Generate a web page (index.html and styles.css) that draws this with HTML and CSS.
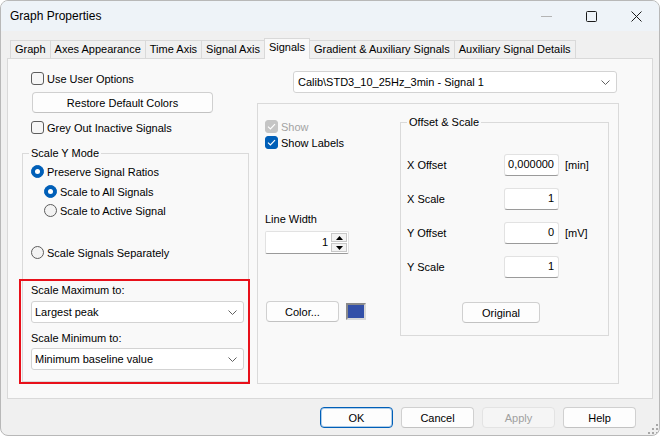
FILE: index.html
```html
<!DOCTYPE html>
<html>
<head>
<meta charset="utf-8">
<title>Graph Properties</title>
<link rel="stylesheet" href="styles.css">
</head>
<body>
<div class="window">
  <div class="titlebar">
    <span class="title">Graph Properties</span>
    <div class="caption">
      <span class="cap"><svg width="11" height="11" viewBox="0 0 11 11"><line x1="0" y1="5.5" x2="11" y2="5.5" stroke="#b4b4b4"/></svg></span>
      <span class="cap"><svg width="11" height="11" viewBox="0 0 11 11"><rect x="0.5" y="0.5" width="10" height="10" rx="1" fill="none" stroke="#1b1b1b"/></svg></span>
      <span class="cap"><svg width="11" height="11" viewBox="0 0 11 11"><path d="M0.5 0.5 L10.5 10.5 M10.5 0.5 L0.5 10.5" stroke="#1b1b1b"/></svg></span>
    </div>
  </div>

  <div class="tabs">
    <span class="tab">Graph</span>
    <span class="tab">Axes Appearance</span>
    <span class="tab">Time Axis</span>
    <span class="tab">Signal Axis</span>
    <span class="tab active">Signals</span>
    <span class="tab">Gradient &amp; Auxiliary Signals</span>
    <span class="tab">Auxiliary Signal Details</span>
  </div>

  <div class="panel">
    <div class="col-left">
      <div class="check-row ind"><span class="cb"></span>Use User Options</div>
      <button class="btn restore">Restore Default Colors</button>
      <div class="check-row ind grey"><span class="cb"></span>Grey Out Inactive Signals</div>

      <fieldset class="group ymode">
        <legend>Scale Y Mode</legend>
        <div class="radio-row r1"><span class="rb on"></span>Preserve Signal Ratios</div>
        <div class="radio-row r2"><span class="rb on"></span>Scale to All Signals</div>
        <div class="radio-row r3"><span class="rb"></span>Scale to Active Signal</div>
        <div class="radio-row r4"><span class="rb"></span>Scale Signals Separately</div>
        <div class="flabel-top lmax">Scale Maximum to:</div>
        <div class="combo cmax"><span>Largest peak</span><svg width="9" height="5" viewBox="0 0 9 5"><path d="M0.5 0.5 L4.5 4.5 L8.5 0.5" fill="none" stroke="#606060"/></svg></div>
        <div class="flabel-top lmin">Scale Minimum to:</div>
        <div class="combo cmin"><span>Minimum baseline value</span><svg width="9" height="5" viewBox="0 0 9 5"><path d="M0.5 0.5 L4.5 4.5 L8.5 0.5" fill="none" stroke="#606060"/></svg></div>
      </fieldset>
      <div class="highlight"></div>
    </div>

    <div class="col-right">
      <div class="combo sig"><span>Calib\STD3_10_25Hz_3min - Signal 1</span><svg width="9" height="5" viewBox="0 0 9 5"><path d="M0.5 0.5 L4.5 4.5 L8.5 0.5" fill="none" stroke="#606060"/></svg></div>
      <div class="sigbox">
        <div class="sigleft">
          <div class="check-row disabled"><span class="cb dis"><svg width="9" height="7" viewBox="0 0 9 7"><path d="M1 3.6 L3.4 6 L8 1.2" fill="none" stroke="#fff" stroke-width="1.2"/></svg></span>Show</div>
          <div class="check-row labels"><span class="cb on"><svg width="9" height="7" viewBox="0 0 9 7"><path d="M1 3.6 L3.4 6 L8 1.2" fill="none" stroke="#fff" stroke-width="1.2"/></svg></span>Show Labels</div>
          <div class="lw-label">Line Width</div>
          <div class="spin">
            <span class="spin-val">1</span>
            <span class="spin-btns">
              <span class="sb"><svg width="7" height="4" viewBox="0 0 7 4"><path d="M0 4 L3.5 0 L7 4 Z" fill="#000"/></svg></span>
              <span class="sb"><svg width="7" height="4" viewBox="0 0 7 4"><path d="M0 0 L3.5 4 L7 0 Z" fill="#000"/></svg></span>
            </span>
          </div>
          <div class="color-row">
            <button class="btn color">Color...</button>
            <span class="swatch"></span>
          </div>
        </div>

        <fieldset class="group offset">
          <legend>Offset &amp; Scale</legend>
          <div class="field-row first"><span class="flabel">X Offset</span><span class="input">0,000000</span><span class="unit">[min]</span></div>
          <div class="field-row"><span class="flabel">X Scale</span><span class="input">1</span></div>
          <div class="field-row"><span class="flabel">Y Offset</span><span class="input">0</span><span class="unit">[mV]</span></div>
          <div class="field-row"><span class="flabel">Y Scale</span><span class="input">1</span></div>
          <button class="btn original">Original</button>
        </fieldset>
      </div>
    </div>
  </div>

  <div class="buttons">
    <button class="btn dlg default">OK</button>
    <button class="btn dlg">Cancel</button>
    <button class="btn dlg disabled">Apply</button>
    <button class="btn dlg">Help</button>
  </div>

  <svg class="grip" width="10" height="10" viewBox="0 0 10 10">
    <rect x="8" y="0" width="2" height="2" fill="#a8a8a8"/>
    <rect x="8" y="4" width="2" height="2" fill="#a8a8a8"/>
    <rect x="4" y="4" width="2" height="2" fill="#a8a8a8"/>
    <rect x="8" y="8" width="2" height="2" fill="#a8a8a8"/>
    <rect x="4" y="8" width="2" height="2" fill="#a8a8a8"/>
    <rect x="0" y="8" width="2" height="2" fill="#a8a8a8"/>
  </svg>
</div>
</body>
</html>
```

FILE: styles.css
```css
* { box-sizing: border-box; }
html, body { margin: 0; padding: 0; background: #ffffff; }
body {
  font-family: "Liberation Sans", Arial, sans-serif;
  font-size: 11px;
  color: #000;
}

.window {
  width: 660px;
  height: 436px;
  border: 1px solid #b8b8b8;
  border-radius: 8px;
  background: #f0f0f0;
  display: flex;
  flex-direction: column;
  position: relative;
  overflow: hidden;
}

/* title bar */
.titlebar {
  height: 30px;
  flex: none;
  display: flex;
  align-items: center;
  background: #eef3f8;
  padding-left: 9px;
}
.title { font-size: 12px; flex: 1; color: #000; }
.caption { display: flex; align-self: stretch; }
.cap { width: 45px; display: flex; align-items: center; justify-content: center; }
.cap svg { display: block; }

/* tabs */
.tabs {
  display: flex;
  align-items: flex-end;
  height: 20px;
  margin: 7px 0 0 9px;
  position: relative;
  z-index: 1;
}
.tab {
  height: 18px;
  padding: 0 4px;
  border: 1px solid #d9d9d9;
  border-bottom: none;
  margin-left: -1px;
  line-height: 17px;
  background: #f0f0f0;
  white-space: nowrap;
}
.tab:first-child { margin-left: 0; }
.tab.active {
  height: 21px;
  margin-bottom: -1px;
  background: #f9f9f9;
  line-height: 17px;
  position: relative;
  z-index: 2;
}

/* main panel */
.panel {
  margin-left: 6px;
  width: 646px;
  height: 341px;
  flex: none;
  border: 1px solid #d9d9d9;
  background: #f9f9f9;
  display: grid;
  grid-template-columns: 230px 362px;
  column-gap: 7px;
  padding: 12px 0 0 12px;
  align-items: start;
}

.col-left { position: relative; display: flex; flex-direction: column; align-items: flex-start; }
.col-right { display: flex; flex-direction: column; align-items: flex-start; }

/* checkbox & radio */
.check-row, .radio-row {
  display: flex;
  align-items: center;
  height: 15px;
  gap: 3px;
  white-space: nowrap;
}
.check-row.ind { margin-left: 11px; }
.check-row.grey { margin-top: 7px; }
.cb {
  width: 13px;
  height: 13px;
  border: 1px solid #5d5d5d;
  border-radius: 3px;
  background: #f6f6f6;
  display: flex;
  align-items: center;
  justify-content: center;
  flex: none;
}
.cb.on { background: #005fb8; border-color: #005fb8; }
.cb.dis { background: #c5c5c5; border-color: #c5c5c5; }
.check-row.disabled { color: #a3a3a3; }

.rb {
  width: 13px;
  height: 13px;
  border: 1px solid #5d5d5d;
  border-radius: 50%;
  background: #f3f3f3;
  flex: none;
  position: relative;
}
.rb.on { background: #005fb8; border-color: #005fb8; }
.rb.on::after {
  content: "";
  position: absolute;
  left: 3px;
  top: 3px;
  width: 5px;
  height: 5px;
  border-radius: 50%;
  background: #fff;
}

/* buttons */
.btn {
  font-family: "Liberation Sans", Arial, sans-serif;
  font-size: 11px;
  color: #000;
  background: #fdfdfd;
  border: 1px solid #d0d0d0;
  border-bottom-color: #c2c2c2;
  border-radius: 4px;
  padding: 0;
  height: 21px;
  text-align: center;
  margin: 0;
}
.btn.restore { margin: 6px 0 0 12px; width: 181px; }

/* group boxes */
.group {
  border: 1px solid #dadada;
  border-radius: 0;
  margin: 0;
  min-width: 0;
}
.group legend {
  padding: 0 2px;
  line-height: 14px;
  height: 14px;
}
.ymode {
  margin: 11px 0 0 2px;
  width: 227px;
  padding: 0 0 11px 8px;
}
.ymode legend { margin-left: -2px; }

.radio-row.r1 { margin-top: 4px; }
.radio-row.r2 { margin-top: 5px; margin-left: 13px; }
.radio-row.r3 { margin-top: 4px; margin-left: 13px; }
.radio-row.r4 { margin-top: 27px; }
.flabel-top { line-height: 14px; height: 14px; }
.lmax { margin-top: 23px; }
.lmin { margin-top: 8px; }

.combo {
  height: 22px;
  background: #fff;
  border: 1px solid #d3d3d3;
  border-radius: 3px;
  display: flex;
  align-items: center;
  justify-content: space-between;
  padding: 0 6px 0 3px;
  white-space: nowrap;
}
.combo svg { display: block; }
.cmax { width: 213px; margin-top: 4px; }
.cmin { width: 213px; margin-top: 3px; }
.combo.sig { margin-left: 36px; width: 324px; padding-left: 4px; }

.highlight {
  position: absolute;
  left: -1px;
  top: 208px;
  width: 231px;
  height: 105px;
  border: 2px solid #e8101a;
  pointer-events: none;
}

/* signal box */
.sigbox {
  margin-top: 10px;
  width: 362px;
  height: 281px;
  border: 1px solid #dadada;
  display: flex;
  align-items: flex-start;
  padding-left: 7px;
}
.sigleft {
  width: 135px;
  flex: none;
  padding-top: 15px;
  display: flex;
  flex-direction: column;
  align-items: flex-start;
}
.check-row.labels { margin-top: 1px; }
.lw-label { margin-top: 62px; line-height: 14px; height: 14px; }
.spin {
  margin-top: 5px;
  width: 84px;
  height: 23px;
  display: flex;
  background: #fff;
  border: 1px solid #e2e2e2;
  border-bottom-color: #9a9a9a;
  border-radius: 2px;
}
.spin-val {
  flex: 1;
  text-align: right;
  padding-right: 3px;
  line-height: 21px;
}
.spin-btns {
  width: 17px;
  display: flex;
  flex-direction: column;
  padding: 1px 1px 1px 0;
  gap: 1px;
}
.sb {
  flex: 1;
  border: 1px solid #c8c8c8;
  background: #f3f3f3;
  display: flex;
  align-items: center;
  justify-content: center;
}
.sb svg { display: block; }
.color-row {
  margin-top: 47px;
  display: flex;
  align-items: center;
}
.btn.color { width: 73px; margin-left: 1px; }
.swatch {
  margin-left: 7px;
  width: 20px;
  height: 17px;
  background: #3350a8;
  border: 2px solid #8a8a8a;
  border-right-color: #d8d8d8;
  border-bottom-color: #d8d8d8;
}

/* offset & scale */
.offset {
  margin: 11px 0 0 0;
  width: 209px;
  padding: 0 0 12px 6px;
  display: flex;
  flex-direction: column;
  align-items: flex-start;
}
.field-row {
  display: flex;
  align-items: center;
  height: 22px;
  margin-top: 12px;
}
.field-row.first { margin-top: 25px; }
.flabel { width: 97px; }
.input {
  width: 55px;
  height: 22px;
  background: #fff;
  border: 1px solid #e2e2e2;
  border-bottom-color: #9a9a9a;
  border-radius: 3px;
  text-align: right;
  padding-right: 4px;
  line-height: 19px;
}
.unit { margin-left: 6px; }
.btn.original { margin: 24px 0 0 55px; width: 78px; }

/* dialog buttons */
.buttons {
  display: flex;
  justify-content: flex-end;
  gap: 8px;
  margin-top: 8px;
  padding-right: 23px;
}
.btn.dlg { width: 73px; }
.btn.default { border-color: #005fb8; box-shadow: inset 0 0 0 1px rgba(0, 95, 184, 0.3); }
.btn.disabled { color: #a0a0a0; background: #f5f5f5; border-color: #e3e3e3; }

.grip {
  position: absolute;
  right: 1px;
  bottom: 1px;
  display: block;
}
```
